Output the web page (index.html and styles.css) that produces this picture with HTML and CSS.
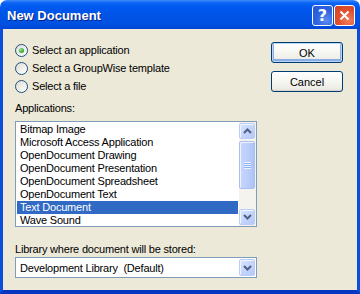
FILE: index.html
```html
<!DOCTYPE html>
<html>
<head>
<meta charset="utf-8">
<link rel="stylesheet" href="styles.css">
</head>
<body>
<div class="window">
  <div class="titlebar">
    <span class="title">New Document</span>
    <div class="tb-buttons">
      <span class="tb-btn help">?</span>
      <span class="tb-btn close"><svg width="11" height="11" viewBox="0 0 11 11"><path d="M1.5 1.5 L9.5 9.5 M9.5 1.5 L1.5 9.5" stroke="#fff" stroke-width="2" fill="none"/></svg></span>
    </div>
  </div>
  <div class="client">
    <div class="main">
      <div class="radios">
        <div class="radio-row"><span class="radio checked"></span><span>Select an application</span></div>
        <div class="radio-row"><span class="radio"></span><span>Select a GroupWise template</span></div>
        <div class="radio-row"><span class="radio"></span><span>Select a file</span></div>
      </div>
      <div class="label">Applications:</div>
      <div class="listbox">
        <ul class="items">
          <li>Bitmap Image</li>
          <li>Microsoft Access Application</li>
          <li>OpenDocument Drawing</li>
          <li>OpenDocument Presentation</li>
          <li>OpenDocument Spreadsheet</li>
          <li>OpenDocument Text</li>
          <li class="selected">Text Document</li>
          <li>Wave Sound</li>
        </ul>
        <div class="scrollbar">
          <span class="sb-btn"><svg width="9" height="6" viewBox="0 0 9 6"><path d="M1 5 L4.5 1.5 L8 5" stroke="#4D6185" stroke-width="2" fill="none"/></svg></span>
          <div class="track">
            <div class="thumb"><span class="grip"></span></div>
          </div>
          <span class="sb-btn"><svg width="9" height="6" viewBox="0 0 9 6"><path d="M1 1 L4.5 4.5 L8 1" stroke="#4D6185" stroke-width="2" fill="none"/></svg></span>
        </div>
      </div>
      <div class="label lib">Library where document will be stored:</div>
      <div class="combo">
        <span class="combo-text">Development Library&nbsp; (Default)</span>
        <span class="sb-btn dd"><svg width="9" height="6" viewBox="0 0 9 6"><path d="M1 1 L4.5 4.5 L8 1" stroke="#4D6185" stroke-width="2" fill="none"/></svg></span>
      </div>
    </div>
    <div class="buttons">
      <button class="btn default">OK</button>
      <button class="btn">Cancel</button>
    </div>
  </div>
</div>
</body>
</html>
```

FILE: styles.css
```css
html, body {
  margin: 0;
  padding: 0;
  background: #ffffff;
}
body {
  font-family: "Liberation Sans", Arial, sans-serif;
  font-size: 11px;
  letter-spacing: -0.2px;
  color: #000;
}
.window {
  width: 360px;
  height: 294px;
  display: flex;
  flex-direction: column;
}
.titlebar {
  height: 29px;
  flex: none;
  box-sizing: border-box;
  border-radius: 7px 7px 0 0;
  background: linear-gradient(to bottom, #3C8CFB 0px, #0B63F4 3px, #0058EE 8px, #0054E6 16px, #0051E2 24px, #0046D4 29px);
  display: flex;
  align-items: center;
  padding: 0 5px 0 7px;
  position: relative;
}
.title {
  flex: 1;
  color: #fff;
  font-family: "Liberation Sans", Arial, sans-serif;
  font-weight: bold;
  font-size: 13px;
  letter-spacing: 0;
  text-shadow: 1px 1px 0 #0A1E80;
  margin-top: 1px;
}
.tb-buttons {
  display: flex;
  gap: 1px;
  margin-top: 1px;
}
.tb-btn {
  width: 21px;
  height: 21px;
  box-sizing: border-box;
  border: 1px solid #fff;
  border-radius: 3px;
  display: flex;
  align-items: center;
  justify-content: center;
  color: #fff;
}
.help {
  background: radial-gradient(circle at 70% 75%, #5A8CF0 0%, #2E64E0 50%, #2656D8 100%);
  font-family: "DejaVu Sans", sans-serif;
  font-weight: bold;
  font-size: 16px;
  line-height: 19px;
  letter-spacing: 0;
}
.close {
  background: radial-gradient(circle at 70% 75%, #F0805E 0%, #E0502E 50%, #CF4224 100%);
}
.client {
  flex: 1;
  display: flex;
  background: #ECE9D8;
  border-left: 3px solid #0A4FDC;
  border-right: 3px solid #0A4FDC;
  border-bottom: 4px solid #0836C0;
  padding: 13px 0 0 12px;
  gap: 14px;
}
.main {
  width: 242px;
  display: flex;
  flex-direction: column;
  padding-top: 2px;
}
.radios {
  display: flex;
  flex-direction: column;
}
.radio-row {
  height: 18px;
  display: flex;
  align-items: flex-start;
  gap: 4px;
  line-height: 13px;
}
.radio {
  width: 13px;
  height: 13px;
  box-sizing: border-box;
  border: 1px solid #1C5180;
  border-radius: 50%;
  background: linear-gradient(135deg, #DCDBD3 0%, #F3F2EE 60%, #FFFFFF 100%);
  display: flex;
  align-items: center;
  justify-content: center;
}
.radio.checked::after {
  content: "";
  width: 5px;
  height: 5px;
  border-radius: 50%;
  background: radial-gradient(circle at 35% 35%, #9CE59C 0%, #3FBF3F 45%, #1E8E1E 100%);
}
.label {
  margin-top: 4px;
  line-height: 13px;
}
.label.lib {
  margin-top: 16px;
}
.listbox {
  margin-top: 6px;
  height: 106px;
  box-sizing: border-box;
  border: 1px solid #7F9DB9;
  background: #fff;
  display: flex;
  overflow: hidden;
}
.items {
  list-style: none;
  margin: 0;
  padding: 1px 1px 0 1px;
  flex: 1;
}
.items li {
  height: 13px;
  line-height: 13px;
  padding-left: 3px;
  white-space: nowrap;
}
.items li.selected {
  background: #316AC5;
  color: #fff;
}
.scrollbar {
  width: 16px;
  display: flex;
  flex-direction: column;
  padding: 1px 1px 1px 0;
  background: #F4F3EE;
}
.sb-btn {
  height: 16px;
  flex: none;
  box-sizing: border-box;
  border: 1px solid #BCCDF5;
  border-radius: 2px;
  background: linear-gradient(135deg, #D9E4FE 0%, #C5D5FC 50%, #B4C8F8 100%);
  box-shadow: inset 1px 1px 0 #F0F4FF;
  display: flex;
  align-items: center;
  justify-content: center;
}
.track {
  flex: 1;
  padding: 2px 0 20px 0;
  display: flex;
  flex-direction: column;
}
.thumb {
  flex: 1;
  box-sizing: border-box;
  border: 1px solid #A9BEF2;
  border-radius: 2px;
  background: linear-gradient(to right, #C7D7FD 0%, #BACDFA 60%, #ADC3F6 100%);
  box-shadow: inset 1px 1px 0 #EEF3FF;
  display: flex;
  align-items: center;
  justify-content: center;
}
.grip {
  width: 7px;
  height: 7px;
  background: repeating-linear-gradient(to bottom, #EEF4FE 0px, #EEF4FE 1px, #8CB0F8 1px, #8CB0F8 2px);
}
.combo {
  margin-top: 1px;
  height: 21px;
  box-sizing: border-box;
  border: 1px solid #7F9DB9;
  background: #fff;
  display: flex;
  align-items: center;
  padding: 0 1px 0 4px;
}
.combo-text {
  flex: 1;
  white-space: nowrap;
}
.sb-btn.dd {
  width: 16px;
  height: 17px;
}
.buttons {
  display: flex;
  flex-direction: column;
  gap: 8px;
}
.btn {
  width: 72px;
  height: 21px;
  box-sizing: border-box;
  border: 1px solid #003C74;
  border-radius: 3px;
  background: linear-gradient(to bottom, #FFFFFF 0%, #F6F6F2 50%, #ECEBE4 90%, #D6D0C5 100%);
  font-family: "Liberation Sans", Arial, sans-serif;
  font-size: 11px;
  color: #000;
  padding: 0;
  margin: 0;
}
.btn.default {
  box-shadow: inset 0 0 0 1px #BCD4F6, inset 0 -1px 0 2px #89ADE4;
}
```
